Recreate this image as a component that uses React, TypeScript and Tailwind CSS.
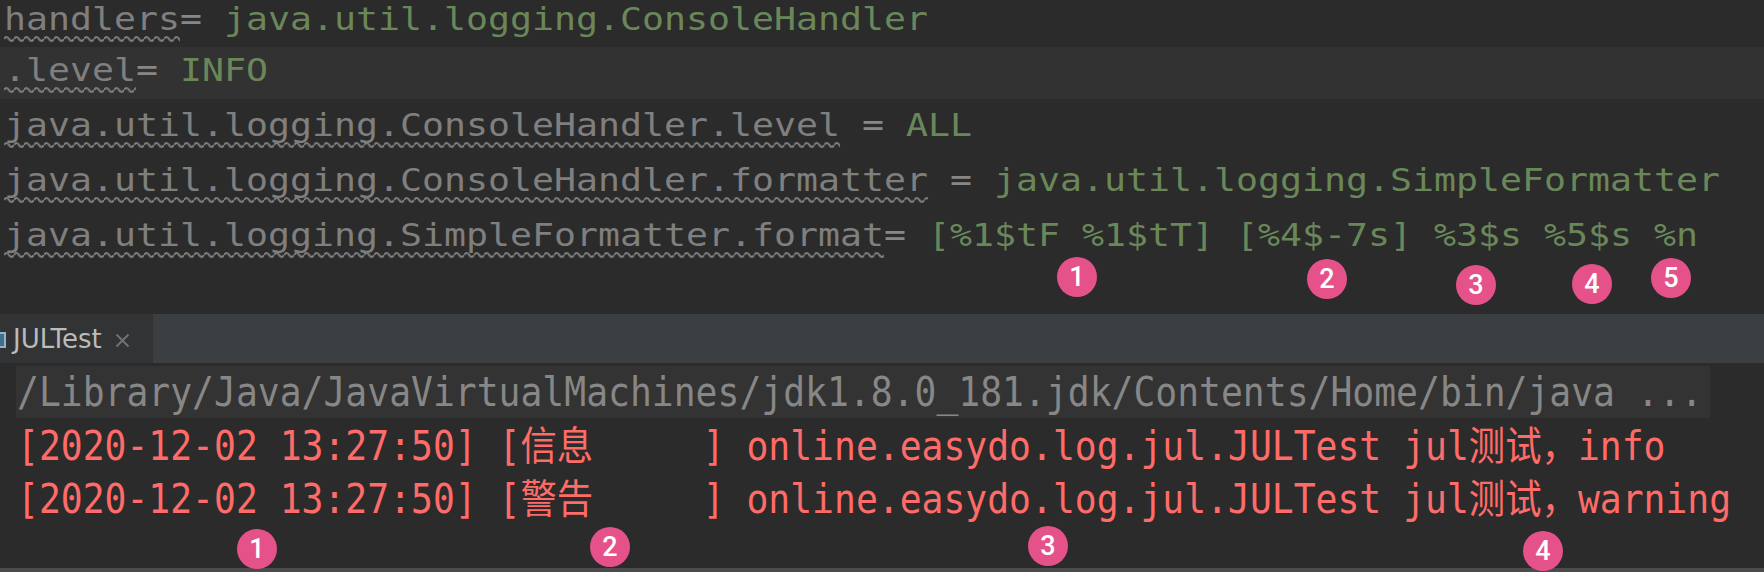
import React, { useId } from "react";

const MONO = "font-['DejaVu_Sans_Mono','Liberation_Mono',monospace]";
const CONSOLE_FONT = "font-['DejaVu_Sans_Mono','Noto_Sans_CJK_SC',monospace]";

function Wavy({ text, waveTop }: { text: string; waveTop: string }) {
  const id = useId().replace(/:/g, "");
  return (
    <span className="relative inline-block">
      {text}
      <svg className={`absolute left-0 ${waveTop} w-full h-[8px] overflow-visible`}>
        <defs>
          <pattern id={`w${id}`} width="8.76" height="8" patternUnits="userSpaceOnUse">
            <path
              d="M0 4 Q2.19 0 4.38 4 T8.76 4"
              fill="none"
              stroke="#7b7b7b"
              strokeWidth="2"
            />
          </pattern>
        </defs>
        <rect x="0" y="0" width="100%" height="8" fill={`url(#w${id})`} />
      </svg>
    </span>
  );
}

function EdRow({
  rowCls,
  waveTop,
  keyText,
  eq,
  value,
}: {
  rowCls: string;
  waveTop: string;
  keyText: string;
  eq: string;
  value: string;
}) {
  return (
    <div className={`${rowCls} pl-[4px] text-[32px] whitespace-pre ${MONO}`}>
      <span className="inline-block origin-left scale-x-[1.142] text-[#7f7f7f]">
        <Wavy text={keyText} waveTop={waveTop} />
        <span className="text-[#878787]">{eq}</span>
        <span className="text-[#6a8759]">{value}</span>
      </span>
    </div>
  );
}

function Badge({ n, pos }: { n: number; pos: string }) {
  return (
    <div
      className={`absolute ${pos} w-[40px] h-[40px] rounded-full bg-[#e5528a] flex items-center justify-center text-white text-[27px] font-medium font-['Roboto','Noto_Sans',sans-serif] leading-none`}
    >
      {n}
    </div>
  );
}

export default function App() {
  return (
    <div className="relative w-[1764px] h-[572px] overflow-hidden bg-[#2b2b2b] flex flex-col">
      {/* editor */}
      <div className="h-[314px] flex flex-col shrink-0">
        <EdRow
          rowCls="h-[47px] leading-[39px]"
          waveTop="top-[35px]"
          keyText="handlers"
          eq="= "
          value="java.util.logging.ConsoleHandler"
        />
        <EdRow
          rowCls="h-[52px] leading-[47px] bg-[#323232]"
          waveTop="top-[39px]"
          keyText=".level"
          eq="= "
          value="INFO"
        />
        <EdRow
          rowCls="h-[55px] leading-[53px]"
          waveTop="top-[42px]"
          keyText="java.util.logging.ConsoleHandler.level"
          eq=" = "
          value="ALL"
        />
        <EdRow
          rowCls="h-[55px] leading-[53px]"
          waveTop="top-[42px]"
          keyText="java.util.logging.ConsoleHandler.formatter"
          eq=" = "
          value="java.util.logging.SimpleFormatter"
        />
        <EdRow
          rowCls="h-[55px] leading-[53px]"
          waveTop="top-[42px]"
          keyText="java.util.logging.SimpleFormatter.format"
          eq="= "
          value="[%1$tF %1$tT] [%4$-7s] %3$s %5$s %n"
        />
      </div>

      {/* tab bar */}
      <div className="h-[49px] shrink-0 bg-[#3c3f41] flex">
        <div className="w-[153px] bg-[#313335] flex items-center">
          <div className="w-[6px] h-[16px] mt-[2px] bg-[#3f6f8c] border-y-2 border-r-2 border-[#8fb4c9]" />
          <span className="ml-[7px] text-[26px] text-[#bbbbbb] font-['DejaVu_Sans','Noto_Sans',sans-serif] leading-none mt-[1px]">
            JULTest
          </span>
          <svg className="ml-[13px] mt-[3px]" width="15" height="15" viewBox="0 0 15 15">
            <path d="M1.5 1.5 L13.5 13.5 M13.5 1.5 L1.5 13.5" stroke="#6f7274" strokeWidth="2" />
          </svg>
        </div>
      </div>

      {/* console */}
      <div className={`pt-[3px] flex flex-col text-[40px] whitespace-pre ${CONSOLE_FONT}`}>
        <div className="ml-[16px] w-[1694px] h-[52px] leading-[52px] bg-[#333333] pl-[1px] text-[#878787]">
          <span className="inline-block origin-left scale-x-[0.909]">
            /Library/Java/JavaVirtualMachines/jdk1.8.0_181.jdk/Contents/Home/bin/java ...
          </span>
        </div>
        <div className="h-[53px] leading-[57px] pl-[17px] text-[#ff6b68]">
          <span className="inline-block origin-left scale-x-[0.909]">
            [2020-12-02 13:27:50] [信息     ] online.easydo.log.jul.JULTest jul测试，info
          </span>
        </div>
        <div className="h-[53px] leading-[57px] pl-[17px] text-[#ff6b68]">
          <span className="inline-block origin-left scale-x-[0.909]">
            [2020-12-02 13:27:50] [警告     ] online.easydo.log.jul.JULTest jul测试，warning
          </span>
        </div>
      </div>
      <div className="flex-1" />
      <div className="h-[4px] shrink-0 bg-[#4b4b4b]" />

      {/* annotation badges */}
      <Badge n={1} pos="left-[1057px] top-[257px]" />
      <Badge n={2} pos="left-[1307px] top-[259px]" />
      <Badge n={3} pos="left-[1456px] top-[265px]" />
      <Badge n={4} pos="left-[1572px] top-[264px]" />
      <Badge n={5} pos="left-[1651px] top-[258px]" />

      <Badge n={1} pos="left-[237px] top-[529px]" />
      <Badge n={2} pos="left-[590px] top-[527px]" />
      <Badge n={3} pos="left-[1028px] top-[526px]" />
      <Badge n={4} pos="left-[1523px] top-[531px]" />
    </div>
  );
}
